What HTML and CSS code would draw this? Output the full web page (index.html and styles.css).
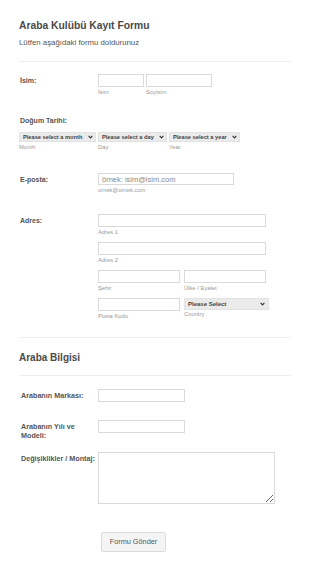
FILE: index.html
```html
<!DOCTYPE html>
<html lang="tr">
<head>
    <meta charset="UTF-8">
    <title>Araba Kulübü Kayıt Formu</title>
    <link rel="stylesheet" href="styles.css">
</head>
<body>
<form class="jf-form">
    <div class="jf-header">
        <h1 class="jf-title">Araba Kulübü Kayıt Formu</h1>
        <div class="jf-subtitle">Lütfen aşağıdaki formu doldurunuz</div>
    </div>

    <div class="jf-line jf-line--name">
        <label class="jf-label">İsim:</label>
        <div class="jf-fields">
            <div class="jf-sub">
                <input class="jf-input jf-w-first" type="text">
                <span class="jf-sublabel">İsim</span>
            </div>
            <div class="jf-sub">
                <input class="jf-input jf-w-last" type="text">
                <span class="jf-sublabel">Soyisim</span>
            </div>
        </div>
    </div>

    <div class="jf-line jf-line--top jf-line--birth">
        <label class="jf-label">Doğum Tarihi:</label>
        <div class="jf-fields jf-fields--dates">
            <div class="jf-sub">
                <div class="jf-select-wrap">
                    <select class="jf-select jf-w-month"><option>Please select a month</option></select>
                    <svg class="jf-chevron" viewBox="0 0 8 6"><path d="M1 1.2 4 4.4 7 1.2" /></svg>
                </div>
                <span class="jf-sublabel">Month</span>
            </div>
            <div class="jf-sub">
                <div class="jf-select-wrap">
                    <select class="jf-select jf-w-day"><option>Please select a day</option></select>
                    <svg class="jf-chevron" viewBox="0 0 8 6"><path d="M1 1.2 4 4.4 7 1.2" /></svg>
                </div>
                <span class="jf-sublabel">Day</span>
            </div>
            <div class="jf-sub">
                <div class="jf-select-wrap">
                    <select class="jf-select jf-w-year"><option>Please select a year</option></select>
                    <svg class="jf-chevron" viewBox="0 0 8 6"><path d="M1 1.2 4 4.4 7 1.2" /></svg>
                </div>
                <span class="jf-sublabel">Year</span>
            </div>
        </div>
    </div>

    <div class="jf-line jf-line--email">
        <label class="jf-label">E-posta:</label>
        <div class="jf-fields">
            <div class="jf-sub">
                <input class="jf-input jf-input--email jf-w-email" type="email" placeholder="örnek: isim@isim.com">
                <span class="jf-sublabel">ornek@ornek.com</span>
            </div>
        </div>
    </div>

    <div class="jf-line jf-line--address">
        <label class="jf-label">Adres:</label>
        <div class="jf-fields jf-fields--address">
            <div class="jf-sub jf-sub--full">
                <input class="jf-input jf-w-street" type="text">
                <span class="jf-sublabel">Adres 1</span>
            </div>
            <div class="jf-sub jf-sub--full">
                <input class="jf-input jf-w-street" type="text">
                <span class="jf-sublabel">Adres 2</span>
            </div>
            <div class="jf-sub">
                <input class="jf-input jf-w-half" type="text">
                <span class="jf-sublabel">Şehir</span>
            </div>
            <div class="jf-sub">
                <input class="jf-input jf-w-half" type="text">
                <span class="jf-sublabel">Ülke / Eyalet</span>
            </div>
            <div class="jf-sub">
                <input class="jf-input jf-w-half" type="text">
                <span class="jf-sublabel">Posta Kodu</span>
            </div>
            <div class="jf-sub">
                <div class="jf-select-wrap">
                    <select class="jf-select jf-select--country"><option>Please Select</option></select>
                    <svg class="jf-chevron jf-chevron--country" viewBox="0 0 8 6"><path d="M1 1.2 4 4.4 7 1.2" /></svg>
                </div>
                <span class="jf-sublabel jf-sublabel--country">Country</span>
            </div>
        </div>
    </div>

    <div class="jf-section">
        <h2 class="jf-section-title">Araba Bilgisi</h2>
    </div>

    <div class="jf-line jf-line--make">
        <label class="jf-label jf-label--wide">Arabanın Markası:</label>
        <div class="jf-fields">
            <input class="jf-input jf-w-car" type="text">
        </div>
    </div>

    <div class="jf-line jf-line--model">
        <label class="jf-label jf-label--wide">Arabanın Yılı ve Modeli:</label>
        <div class="jf-fields">
            <input class="jf-input jf-w-car" type="text">
        </div>
    </div>

    <div class="jf-line jf-line--mods">
        <label class="jf-label jf-label--wide">Değişiklikler / Montaj:</label>
        <div class="jf-fields">
            <textarea class="jf-textarea"></textarea>
        </div>
    </div>

    <div class="jf-buttons">
        <button class="jf-submit" type="button">Formu Gönder</button>
    </div>
</form>
</body>
</html>
```

FILE: styles.css
```css
body {
    margin: 0;
    background: #fff;
    font-family: "Liberation Sans", Arial, sans-serif;
    color: #555;
}
.jf-form {
    width: 272px;
    padding: 0 19px 20px;
}
.jf-header {
    padding: 20px 0 13px;
    border-bottom: 1px solid #eeeeee;
}
.jf-title {
    margin: 0;
    font-size: 10.3px;
    line-height: 12px;
    font-weight: bold;
    color: #4a4a4a;
}
.jf-subtitle {
    margin-top: 6px;
    font-size: 7.8px;
    line-height: 10px;
    color: #555;
}

/* rows */
.jf-line {
    display: flex;
    align-items: flex-start;
}
.jf-line--top {
    flex-direction: column;
}
.jf-label {
    flex: none;
    width: 77px;
    padding: 2px 0 0 1px;
    font-size: 7px;
    line-height: 9px;
    font-weight: bold;
    color: #555;
}
.jf-label--wide {
    width: 76px;
    padding-left: 2px;
    font-size: 7.2px;
}
.jf-line--top .jf-label {
    width: auto;
    padding-top: 0;
}
.jf-fields {
    display: flex;
    gap: 2px;
    padding-left: 1px;
}
.jf-fields--dates {
    padding-left: 0;
    margin-top: 7px;
}
.jf-fields--address {
    flex-wrap: wrap;
    width: 172px;
    column-gap: 4px;
    row-gap: 6px;
}
.jf-sub {
    display: flex;
    flex-direction: column;
}
.jf-sub--full {
    width: 100%;
}
.jf-sublabel {
    margin-top: 2px;
    font-size: 5.8px;
    line-height: 7px;
    color: #999;
}
.jf-sublabel--country {
    margin-top: 1px;
}

.jf-line--name { margin-top: 12px; }
.jf-line--birth { margin-top: 20px; }
.jf-line--email { margin-top: 22px; }
.jf-line--address { margin-top: 20px; }
.jf-line--make { margin-top: 13px; }
.jf-line--model { margin-top: 18px; }
.jf-line--mods { margin-top: 12px; }

/* controls */
.jf-input {
    box-sizing: border-box;
    height: 13px;
    margin: 0;
    padding: 0 3px;
    border: 1px solid #dadada;
    border-radius: 0;
    background: #fff;
    font-family: inherit;
    font-size: 7.5px;
    color: #555;
}
.jf-input--email {
    height: 12px;
}
.jf-input::placeholder {
    color: #8a8a8a;
}
.jf-w-first { width: 46px; }
.jf-w-last { width: 66px; }
.jf-w-email { width: 136px; }
.jf-w-street { width: 168px; }
.jf-w-half { width: 82px; }
.jf-w-car { width: 87px; }

.jf-select-wrap {
    position: relative;
}
.jf-select {
    -webkit-appearance: none;
    appearance: none;
    box-sizing: border-box;
    display: block;
    height: 10px;
    margin: 0;
    padding: 0 0 0 3px;
    border: 1px solid #e2e2e2;
    border-radius: 0;
    background-color: #ebebeb;
    font-family: inherit;
    font-size: 5.7px;
    font-weight: bold;
    color: #444;
}
.jf-w-month { width: 77px; }
.jf-w-day { width: 69px; }
.jf-w-year { width: 71px; }
.jf-select--country {
    width: 85px;
    height: 12px;
    font-size: 6px;
}
.jf-chevron {
    position: absolute;
    top: 3px;
    right: 3px;
    width: 5px;
    height: 4px;
    fill: none;
    stroke: #333;
    stroke-width: 1.8;
    pointer-events: none;
}
.jf-chevron--country {
    top: 4px;
    right: 4px;
}

.jf-textarea {
    box-sizing: border-box;
    display: block;
    width: 177px;
    height: 52px;
    margin: 0;
    border: 1px solid #dadada;
    border-radius: 0;
    resize: both;
}

/* second section */
.jf-section {
    margin-top: 17px;
    padding: 14px 0 11px;
    border-top: 1px solid #eeeeee;
    border-bottom: 1px solid #eeeeee;
}
.jf-section-title {
    margin: 0;
    font-size: 10px;
    line-height: 12px;
    font-weight: bold;
    color: #4a4a4a;
}

.jf-buttons {
    margin-top: 26px;
    padding-left: 82px;
}
.jf-submit {
    width: 65px;
    height: 20px;
    padding: 0;
    border: 1px solid #dcdcdc;
    border-radius: 2px;
    background: #f4f4f4;
    font-family: inherit;
    font-size: 7.3px;
    color: #555;
}
```
